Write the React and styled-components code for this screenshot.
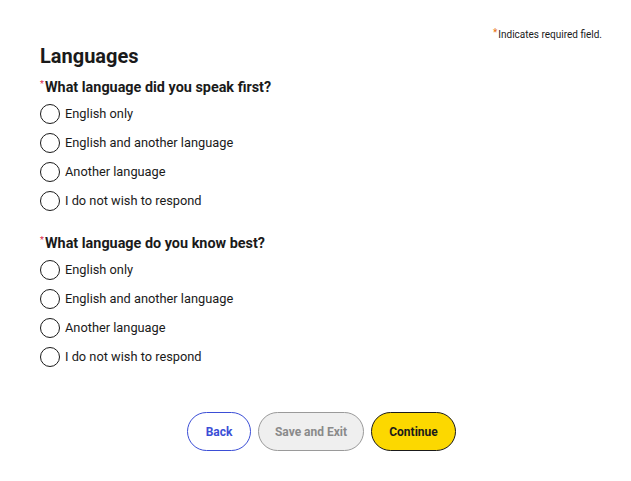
import React, { useState } from 'react';
import styled, { createGlobalStyle } from 'styled-components';

const Global = createGlobalStyle`
  body{margin:0;background:#fff;font-family:Roboto,"Liberation Sans",sans-serif;color:#1a1a1a;}
`;

const Page = styled.div`
  width:631px;height:481px;box-sizing:border-box;padding:28px 29px 0 40px;
  display:flex;flex-direction:column;
`;
const ReqNote = styled.div`
  align-self:flex-end;font-size:10px;line-height:14px;color:#1a1a1a;
  span{color:#e8710a;font-size:10px;vertical-align:top;position:relative;top:-2px;margin-right:1px;}
`;
const Title = styled.h1`
  margin:2px 0 0;font-size:20px;line-height:24px;font-weight:700;color:#1a1a1a;
`;
const Fieldset = styled.fieldset`
  border:0;margin:0;padding:0;display:flex;flex-direction:column;
  margin-top:${p => p.$top}px;
`;
const Legend = styled.div`
  font-size:14.4px;font-weight:700;line-height:18px;padding-left:5px;position:relative;margin-bottom:2px;
  &::before{content:'*';position:absolute;left:0;top:-4px;color:#d9264a;font-size:9px;font-weight:400;}
`;
const Option = styled.label`
  display:flex;align-items:center;gap:5px;height:29px;font-size:12.8px;color:#1a1a1a;cursor:pointer;
`;
const Circle = styled.span`
  width:18px;height:18px;border:1.5px solid #1a1a1a;border-radius:50%;box-sizing:content-box;
  display:flex;align-items:center;justify-content:center;flex:none;
  &::after{content:'';width:10px;height:10px;border-radius:50%;background:${p => p.$on ? '#1a1a1a' : 'transparent'};}
`;
const Actions = styled.div`
  display:flex;justify-content:center;gap:7px;margin-top:41px;margin-left:-28px;margin-right:-29px;
`;
const Btn = styled.button`
  height:39px;border-radius:20px;font-family:inherit;font-size:12px;font-weight:700;padding:0;
  width:${p => p.$w}px;
  ${p => p.$kind === 'back' && 'background:#fff;border:1px solid #3b4ed6;color:#3b4ed6;'}
  ${p => p.$kind === 'save' && 'background:#efefef;border:1px solid #9a9a9a;color:#8a8a8a;'}
  ${p => p.$kind === 'go' && 'background:#fcd800;border:1px solid #1a1a1a;color:#1a1a1a;'}
`;

const opts = ['English only', 'English and another language', 'Another language', 'I do not wish to respond'];

function Question({ label, top }) {
  const [val, setVal] = useState(null);
  return (
    <Fieldset $top={top}>
      <Legend>{label}</Legend>
      {opts.map(o => (
        <Option key={o} onClick={() => setVal(o)}>
          <Circle $on={val === o} />
          {o}
        </Option>
      ))}
    </Fieldset>
  );
}

export default function App() {
  return (
    <>
      <Global />
      <Page>
        <ReqNote><span>*</span>Indicates required field.</ReqNote>
        <Title>Languages</Title>
        <Question label="What language did you speak first?" top={11} />
        <Question label="What language do you know best?" top={20} />
        <Actions>
          <Btn $kind="back" $w={64}>Back</Btn>
          <Btn $kind="save" $w={106}>Save and Exit</Btn>
          <Btn $kind="go" $w={85}>Continue</Btn>
        </Actions>
      </Page>
    </>
  );
}
